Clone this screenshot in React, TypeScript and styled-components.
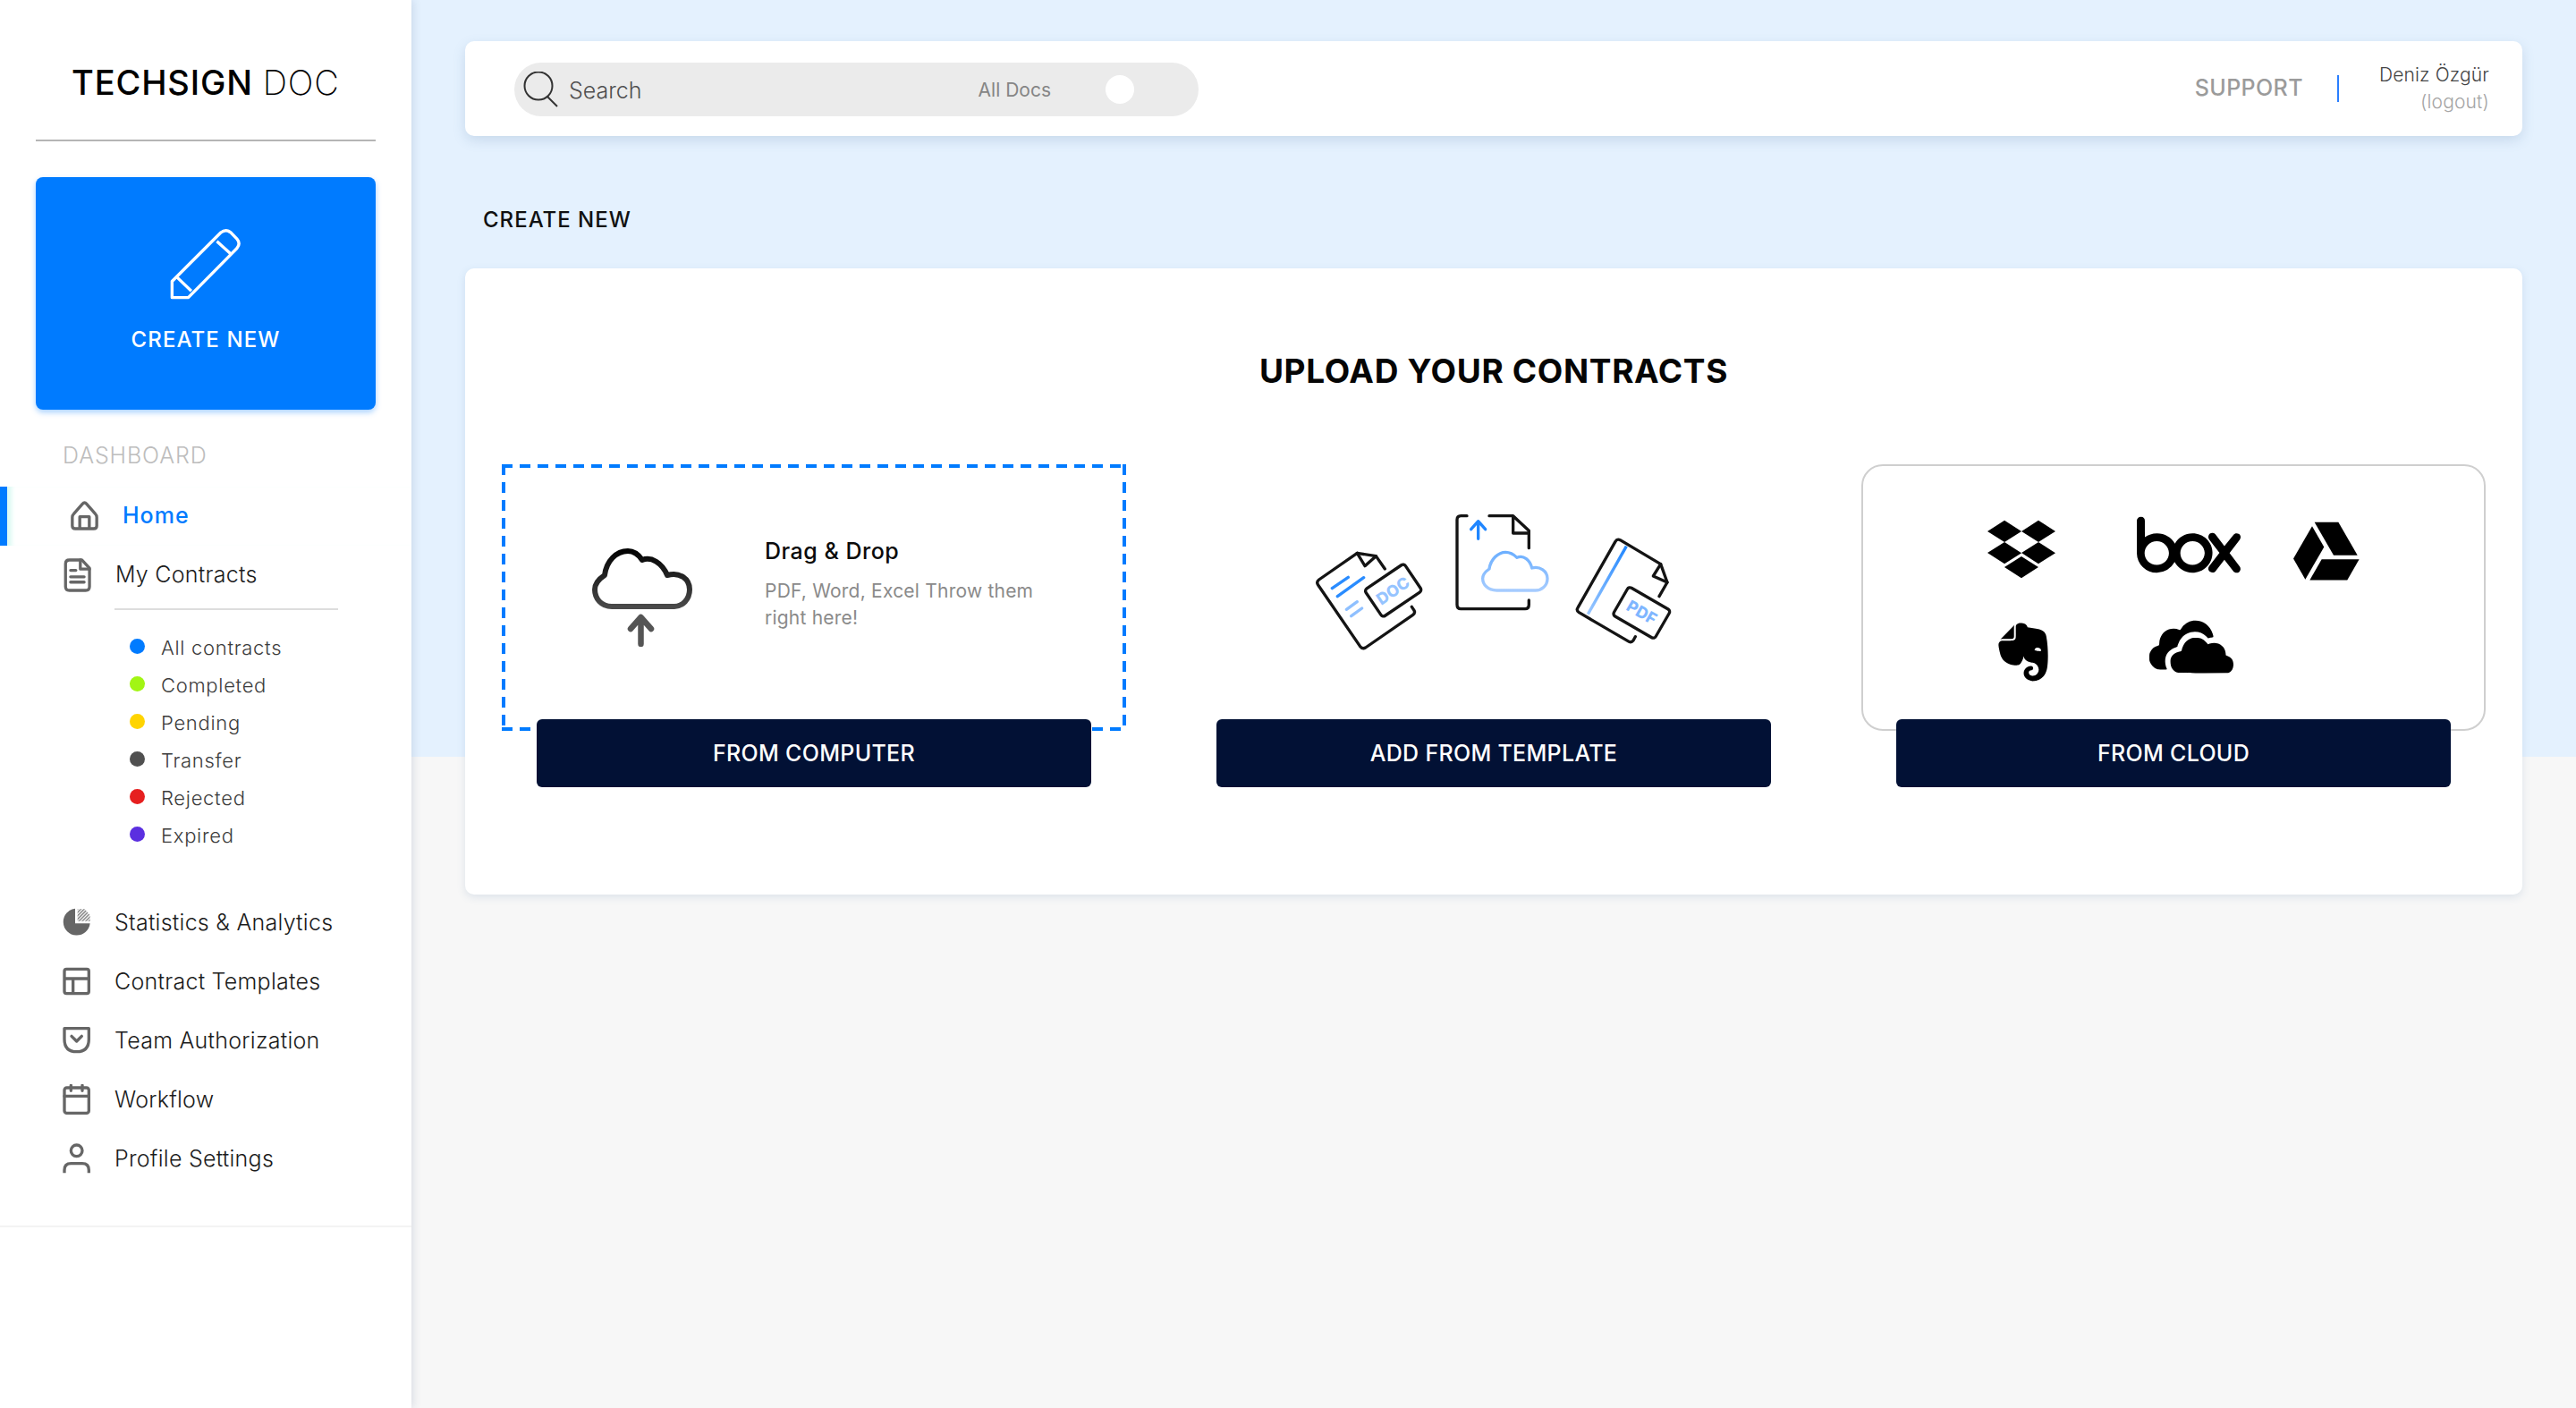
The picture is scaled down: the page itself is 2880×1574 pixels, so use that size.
import React from 'react';
import styled, { createGlobalStyle } from 'styled-components';
import { FaDropbox, FaEvernote } from 'react-icons/fa';
import { ImGoogleDrive, ImOnedrive } from 'react-icons/im';
import { SiBox } from 'react-icons/si';

const GlobalStyle = createGlobalStyle`
  html, body {
    margin: 0;
    padding: 0;
    background: #f7f7f7;
  }
  * {
    box-sizing: border-box;
  }
  body {
    font-family: Inter, "Liberation Sans", sans-serif;
  }
`;

const Page = styled.div`
  display: flex;
  width: 2880px;
  height: 1574px;
  overflow: hidden;
`;

const Sidebar = styled.aside`
  position: relative;
  z-index: 1;
  flex: 0 0 460px;
  background: #fff;
  box-shadow: 2px 0 9px rgba(60, 90, 130, 0.16);
`;

const Logo = styled.div`
  padding: 64px 0 36px 80px;
  font-size: 38px;
  line-height: 56px;
  font-weight: 500;
  letter-spacing: 0.85px;
  color: #000;
  white-space: nowrap;

  span {
    font-weight: 200;
  }
`;

const Rule = styled.div<{ $left: number; $width: number; $color: string; $top?: number }>`
  width: ${({ $width }) => $width}px;
  height: 2px;
  margin-top: ${({ $top }) => $top ?? 0}px;
  margin-left: ${({ $left }) => $left}px;
  background: ${({ $color }) => $color};
`;

const CreateCard = styled.button`
  display: flex;
  flex-direction: column;
  align-items: center;
  width: 380px;
  height: 260px;
  margin: 40px 0 0 40px;
  padding: 55px 0 0;
  border: none;
  border-radius: 8px;
  background: #007bff;
  box-shadow: 0 3px 6px rgba(0, 123, 255, 0.35);
  color: #fff;
  font-family: inherit;
`;

const CreateLabel = styled.span`
  margin-top: 28px;
  font-size: 24px;
  line-height: 30px;
  font-weight: 500;
  letter-spacing: 1.1px;
`;

const SectionLabel = styled.div`
  margin: 36px 0 20px 70px;
  font-size: 25px;
  line-height: 30px;
  font-weight: 300;
  letter-spacing: 0.9px;
  color: #bdbdbd;
`;

const NavRow = styled.div<{ $active?: boolean }>`
  display: flex;
  align-items: center;
  gap: 26px;
  height: 66px;
  padding: 0 0 2px 70px;
  font-size: 25px;
  font-weight: ${({ $active }) => ($active ? 500 : 300)};
  letter-spacing: ${({ $active }) => ($active ? '1px' : '0.25px')};
  color: ${({ $active }) => ($active ? '#007bff' : '#1c1c1c')};
  ${({ $active }) =>
    $active &&
    `
    border-left: 8px solid #007bff;
    box-shadow: inset 8px 0 5px -3px #dcfaf3;
  `}
`;

const NavIcon = styled.span`
  display: flex;
  flex: 0 0 30px;
  justify-content: center;
  align-items: center;

  svg {
    display: block;
    flex: none;
  }
`;

const StatusList = styled.ul`
  margin: 19px 0 46px;
  padding: 0 0 0 145px;
  list-style: none;
`;

const StatusItem = styled.li`
  display: flex;
  align-items: center;
  gap: 18px;
  height: 42px;
  font-size: 22px;
  font-weight: 300;
  letter-spacing: 0.7px;
  color: #3c3c3c;

  span {
    padding-top: 3px;
  }
`;

const Dot = styled.i<{ $color: string }>`
  flex: 0 0 17px;
  height: 17px;
  border-radius: 50%;
  background: ${({ $color }) => $color};
`;

const SidebarFoot = styled.div`
  height: 2px;
  margin-top: 41px;
  background: #f3f3f3;
`;

const Main = styled.main`
  flex: 1;
  padding: 46px 60px 0;
  background: linear-gradient(#e4f1fe 846px, #f7f7f7 846px);
`;

const Topbar = styled.header`
  display: flex;
  align-items: center;
  height: 106px;
  padding: 0 37px 0 55px;
  border-radius: 10px;
  background: #fff;
  box-shadow: 0 5px 14px rgba(90, 125, 165, 0.2);
`;

const SearchPill = styled.div`
  display: flex;
  align-items: center;
  width: 765px;
  height: 60px;
  margin-top: 1px;
  padding-left: 10px;
  border-radius: 30px;
  background: #ebebeb;
`;

const SearchText = styled.span`
  flex: 1;
  margin-left: 11px;
  padding-top: 2px;
  font-size: 25px;
  font-weight: 300;
  color: #4f4f4f;
`;

const ScopeText = styled.span`
  padding-top: 2px;
  font-size: 21px;
  font-weight: 400;
  color: #858585;
`;

const ToggleKnob = styled.span`
  width: 32px;
  height: 32px;
  margin: 0 72px 0 61px;
  border-radius: 50%;
  background: #fff;
`;

const SupportLink = styled.span`
  margin-left: auto;
  padding-bottom: 2px;
  font-size: 25px;
  font-weight: 500;
  letter-spacing: 0.4px;
  color: #9b9b9b;
`;

const TopDivider = styled.span`
  width: 2px;
  height: 30px;
  margin: 0 45px 0 38px;
  background: #2a7fff;
`;

const UserBox = styled.div`
  display: flex;
  flex-direction: column;
  align-items: flex-end;
  font-size: 21px;
  line-height: 30px;
  font-weight: 300;
  letter-spacing: 0.15px;
  color: #444;

  small {
    font-size: 21px;
    color: #a5a5a5;
  }
`;

const PageHeading = styled.h2`
  margin: 79px 0 39px;
  padding-left: 20px;
  font-size: 24px;
  line-height: 30px;
  font-weight: 500;
  letter-spacing: 1px;
  color: #111;
`;

const Card = styled.section`
  height: 700px;
  padding: 93px 41px 0;
  border-radius: 10px;
  background: #fff;
  box-shadow: 0 3px 10px rgba(90, 125, 165, 0.16);
`;

const CardTitle = styled.h1`
  margin: 0 0 82px;
  font-size: 37px;
  line-height: 44px;
  font-weight: 700;
  letter-spacing: 0.65px;
  text-align: center;
  color: #050505;
`;

const Columns = styled.div`
  display: grid;
  grid-template-columns: repeat(3, 698px);
  gap: 62px;
`;

const Column = styled.div`
  display: flex;
  flex-direction: column;
  align-items: center;
`;

const DropPanel = styled.div`
  display: flex;
  align-items: center;
  gap: 81px;
  width: 100%;
  height: 298px;
  padding-left: 101px;
  background:
    repeating-linear-gradient(90deg, #007bff 0 12px, transparent 12px 20px) top / 100% 4px no-repeat,
    repeating-linear-gradient(90deg, #007bff 0 12px, transparent 12px 20px) bottom / 100% 4px no-repeat,
    repeating-linear-gradient(180deg, #007bff 0 12px, transparent 12px 20px) left / 4px 100% no-repeat,
    repeating-linear-gradient(180deg, #007bff 0 12px, transparent 12px 20px) right / 4px 100% no-repeat;
`;

const DropText = styled.div`
  width: 340px;
  padding-bottom: 29px;
`;

const DropTitle = styled.div`
  font-size: 25px;
  line-height: 30px;
  font-weight: 500;
  letter-spacing: 0.5px;
  color: #0b0b0b;
`;

const DropHint = styled.div`
  margin-top: 15px;
  font-size: 21px;
  line-height: 30px;
  letter-spacing: 0.22px;
  color: #8a8a8a;
`;

const TemplatePanel = styled.div`
  display: flex;
  justify-content: center;
  width: 100%;
  height: 298px;
  padding: 21px 20px 0 0;
`;

const CloudPanel = styled.div`
  display: grid;
  grid-template-columns: 148px 226px 82px;
  grid-template-rows: 70px 70px;
  row-gap: 44px;
  align-items: center;
  justify-items: center;
  width: 100%;
  height: 298px;
  padding: 58px 0 0 103px;
  border: 2px solid #cfcfcf;
  border-radius: 24px;
  color: #000;
`;

const BoxLogo = styled(SiBox)`
  margin-top: -10px;
`;

const DriveLogo = styled(ImGoogleDrive)`
  margin-top: 3px;
`;

const EvernoteLogo = styled(FaEvernote)`
  margin: 2px 0 0 3px;
`;

const OneDriveLogo = styled(ImOnedrive)`
  margin: -10px 0 0 5px;
`;

const ActionButton = styled.button`
  width: 620px;
  height: 76px;
  margin-top: -13px;
  border: none;
  border-radius: 6px;
  background: #021135;
  color: #fff;
  font-family: inherit;
  font-size: 25px;
  font-weight: 500;
  letter-spacing: 0.3px;
`;

const PencilIcon = () => (
  <svg width="84" height="84" viewBox="560 755 250 250" fill="none" stroke="#fff" strokeWidth="10" strokeLinejoin="round">
    <path d="M573 992V938L735 776Q752 762 769 776L789 797Q802 812 789 828L627 992Z" />
    <path d="M722 805L770 848M590 925L637 970" />
  </svg>
);

const HomeIcon = () => (
  <svg width="33" height="36" viewBox="230 236 98 108" fill="none" stroke="#666" strokeWidth="10" strokeLinejoin="round">
    <path d="M238 297Q238 290 243 285L272 252Q279 244 286 252L315 285Q320 290 320 297V325Q320 335 310 335H248Q238 335 238 325Z" />
    <path d="M263 335V295H295V335" />
  </svg>
);

const DocIcon = () => (
  <svg width="33" height="39" viewBox="206 428 98 118" fill="none" stroke="#666" strokeWidth="10" strokeLinecap="round" strokeLinejoin="round">
    <path d="M215 450Q215 437 228 437H270L296 465V527Q296 540 283 540H228Q215 540 215 527Z" />
    <path d="M265 437V468H296M232 472H250M232 494H278M232 512H278" />
  </svg>
);

const PieIcon = () => (
  <svg width="32" height="32" viewBox="208 171 96 96" fill="none">
    <defs>
      <pattern id="pieHatch" width="8" height="8" patternUnits="userSpaceOnUse" patternTransform="rotate(45)">
        <rect width="4" height="8" fill="#777" />
      </pattern>
    </defs>
    <path d="M250 173A45 45 0 1 0 300 223H250Z" fill="#666" />
    <path d="M258 175H282L300 195V215H258Z" fill="url(#pieHatch)" />
  </svg>
);

const TemplateIcon = () => (
  <svg width="32" height="32" viewBox="208 369 96 96" fill="none" stroke="#666" strokeWidth="10">
    <rect x="214" y="376" width="82" height="82" rx="7" />
    <path d="M214 408H296M243 408V458" />
  </svg>
);

const ShieldIcon = () => (
  <svg width="32" height="32" viewBox="208 566 96 96" fill="none" stroke="#666" strokeWidth="10" strokeLinecap="round" strokeLinejoin="round">
    <path d="M214 574H296V610Q296 652 255 652Q214 652 214 610Z" />
    <path d="M238 600L255 617L272 600" />
  </svg>
);

const CalendarIcon = () => (
  <svg width="32" height="34" viewBox="208 760 96 102" fill="none" stroke="#666" strokeWidth="10" strokeLinecap="round">
    <rect x="214" y="772" width="82" height="85" rx="8" />
    <path d="M214 800H296M236 764V782M274 764V782" />
  </svg>
);

const UserIcon = () => (
  <svg width="32" height="36" viewBox="208 958 96 106" fill="none" stroke="#666" strokeWidth="10">
    <circle cx="255" cy="985" r="19" />
    <path d="M214 1060V1050Q214 1028 236 1028H274Q296 1028 296 1050V1060" />
  </svg>
);

const SearchIcon = () => (
  <svg width="40" height="40" viewBox="0 0 40 40" fill="none" stroke="#333" strokeWidth="2">
    <circle cx="17" cy="16" r="15.5" />
    <path d="M27 28L38 39" />
  </svg>
);

const UploadCloudIcon = () => (
  <svg width="112" height="110" viewBox="0 0 112 110" fill="none" strokeLinecap="round" strokeLinejoin="round">
    <defs>
      <linearGradient id="cloudStroke" x1="0" y1="0" x2="0" y2="66" gradientUnits="userSpaceOnUse">
        <stop offset="0" stopColor="#000" />
        <stop offset="1" stopColor="#4a4a4a" />
      </linearGradient>
    </defs>
    <path
      d="M22 65C10 65 3 56 3 46C3 39 8 34 14 30C16 14 27 3 40 3C47 3 52 7 56 13C66 9 78 16 84 30C98 26 109 34 109 46C109 57 101 65 92 65Z"
      stroke="url(#cloudStroke)"
      strokeWidth="6"
    />
    <path d="M54.5 107V78M43 90L54.5 77L66 90" stroke="#555" strokeWidth="6.5" />
  </svg>
);

const TemplateArt = () => (
  <svg width="520" height="220" viewBox="0 0 1560 660" fill="none" strokeWidth="10" strokeLinecap="round" strokeLinejoin="round">
    <defs>
      <linearGradient id="spineBlue" x1="1255" y1="210" x2="1125" y2="440" gradientUnits="userSpaceOnUse">
        <stop offset="0" stopColor="#1f86ff" />
        <stop offset="1" stopColor="#9cc8ff" />
      </linearGradient>
      <linearGradient id="tplCloud" x1="0" y1="230" x2="0" y2="362" gradientUnits="userSpaceOnUse">
        <stop offset="0" stopColor="#6cafff" />
        <stop offset="1" stopColor="#a6ccff" />
      </linearGradient>
    </defs>

    <g stroke="#141414">
      <path d="M445 288L415 245L352 235L224 324Q214 332 221 342L362 548Q370 558 380 552L538 443Q548 436 543 427L535 415" />
      <path d="M352 235L378 278L415 245" />
      <rect x="393" y="305" width="160" height="110" rx="10" transform="rotate(-34 473 360)" />
    </g>
    <path d="M268 353L322 316M286 380L374 317" stroke="#2a8cff" />
    <path d="M316 424L352 398M332 446L368 420" stroke="#8fc0ff" />
    <text x="473" y="380" fontSize="54" fontWeight="800" fill="#96c4ff" textAnchor="middle" transform="rotate(-34 473 362)">DOC</text>

    <g stroke="#141414">
      <path d="M720 110H700Q687 110 687 123V408Q687 422 700 422H915Q928 422 928 408V393" />
      <path d="M795 110H875L928 160V218M875 110V168H928" />
    </g>
    <path d="M758 187V128M734 155L758 128L782 155" stroke="#1f86ff" />
    <path
      d="M820 360C790 360 773 340 773 320C773 305 785 295 795 288C800 255 825 232 850 232C865 232 878 240 888 250C910 240 932 258 938 285C965 278 990 295 990 320C990 345 970 360 950 360Z"
      stroke="url(#tplCloud)"
    />

    <g stroke="#141414">
      <path d="M1285 515L1278 528Q1272 536 1264 532L1096 434Q1086 427 1092 418L1218 196Q1224 186 1234 191L1370 272L1392 333L1365 380" />
      <path d="M1370 272L1345 312L1392 333" />
      <rect x="1225" y="380" width="162" height="110" rx="10" transform="rotate(30 1306 435)" />
    </g>
    <path d="M1255 212L1126 440" stroke="url(#spineBlue)" strokeLinecap="butt" />
    <text x="1306" y="453" fontSize="54" fontWeight="800" fill="#7fb6ff" textAnchor="middle" transform="rotate(30 1306 435)">PDF</text>
  </svg>
);

const statuses = [
  { label: 'All contracts', color: '#007bff' },
  { label: 'Completed', color: '#a2f514' },
  { label: 'Pending', color: '#ffd400' },
  { label: 'Transfer', color: '#505050' },
  { label: 'Rejected', color: '#e61f1f' },
  { label: 'Expired', color: '#5b2fe0' },
];

const navItems = [
  { label: 'Statistics & Analytics', icon: <PieIcon /> },
  { label: 'Contract Templates', icon: <TemplateIcon /> },
  { label: 'Team Authorization', icon: <ShieldIcon /> },
  { label: 'Workflow', icon: <CalendarIcon /> },
  { label: 'Profile Settings', icon: <UserIcon /> },
];

const App: React.FC = () => (
  <Page>
    <GlobalStyle />
    <Sidebar>
      <Logo>
        TECHSIGN <span>DOC</span>
      </Logo>
      <Rule $left={40} $width={380} $color="#b5b5b5" />
      <CreateCard>
        <PencilIcon />
        <CreateLabel>CREATE NEW</CreateLabel>
      </CreateCard>
      <SectionLabel>DASHBOARD</SectionLabel>
      <NavRow $active>
        <NavIcon>
          <HomeIcon />
        </NavIcon>
        Home
      </NavRow>
      <NavRow>
        <NavIcon>
          <DocIcon />
        </NavIcon>
        My Contracts
      </NavRow>
      <Rule $left={128} $width={250} $color="#dddddd" $top={4} />
      <StatusList>
        {statuses.map((status) => (
          <StatusItem key={status.label}>
            <Dot $color={status.color} />
            <span>{status.label}</span>
          </StatusItem>
        ))}
      </StatusList>
      {navItems.map((item) => (
        <NavRow key={item.label}>
          <NavIcon>{item.icon}</NavIcon>
          {item.label}
        </NavRow>
      ))}
      <SidebarFoot />
    </Sidebar>

    <Main>
      <Topbar>
        <SearchPill>
          <SearchIcon />
          <SearchText>Search</SearchText>
          <ScopeText>All Docs</ScopeText>
          <ToggleKnob />
        </SearchPill>
        <SupportLink>SUPPORT</SupportLink>
        <TopDivider />
        <UserBox>
          <span>Deniz Özgür</span>
          <small>(logout)</small>
        </UserBox>
      </Topbar>

      <PageHeading>CREATE NEW</PageHeading>

      <Card>
        <CardTitle>UPLOAD YOUR CONTRACTS</CardTitle>
        <Columns>
          <Column>
            <DropPanel>
              <UploadCloudIcon />
              <DropText>
                <DropTitle>Drag &amp; Drop</DropTitle>
                <DropHint>PDF, Word, Excel Throw them right here!</DropHint>
              </DropText>
            </DropPanel>
            <ActionButton>FROM COMPUTER</ActionButton>
          </Column>
          <Column>
            <TemplatePanel>
              <TemplateArt />
            </TemplatePanel>
            <ActionButton>ADD FROM TEMPLATE</ActionButton>
          </Column>
          <Column>
            <CloudPanel>
              <FaDropbox size={76} />
              <BoxLogo size={116} />
              <DriveLogo size={74} />
              <EvernoteLogo size={74} />
              <OneDriveLogo size={94} />
            </CloudPanel>
            <ActionButton>FROM CLOUD</ActionButton>
          </Column>
        </Columns>
      </Card>
    </Main>
  </Page>
);

export default App;
